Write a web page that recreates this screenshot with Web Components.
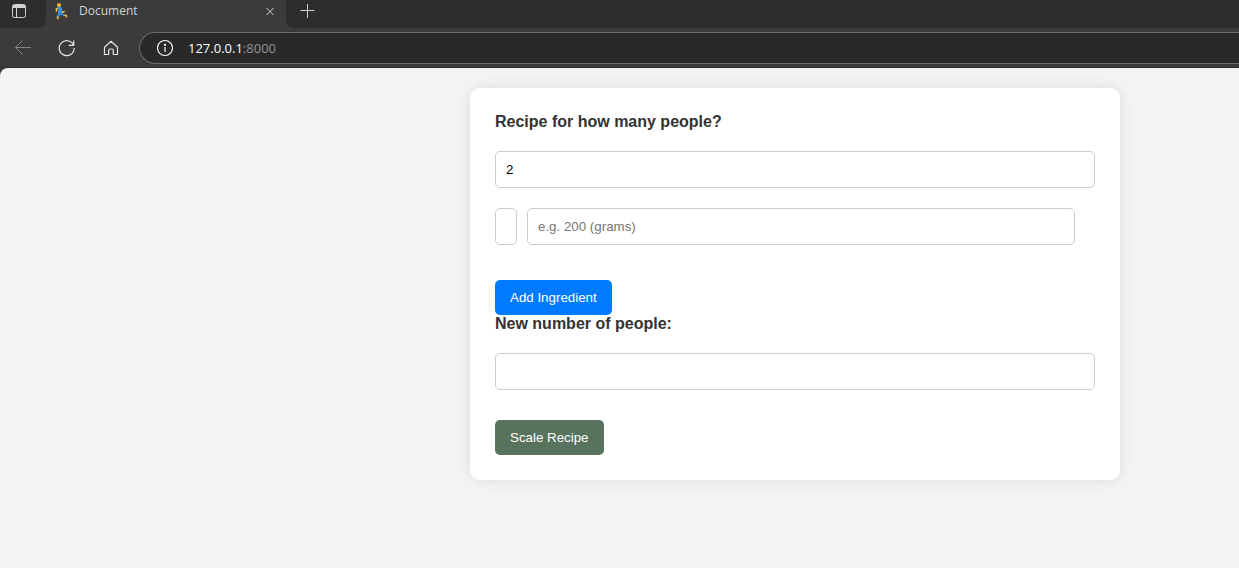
<!DOCTYPE html>
<html lang="en">
<head>
<meta charset="utf-8">
<title>Document</title>
<style>
  html { height: 100%; }
  body { margin: 0; min-height: 100%; display: flex; flex-direction: column; background: #3b3b3b; font-family: "Liberation Sans", Arial, sans-serif; overflow-x: hidden; }
  recipe-page { flex: 1; }
</style>
</head>
<body>
<tab-strip><browser-tab>Document</browser-tab></tab-strip>
<browser-toolbar><span>127.0.0.1</span><span slot="port">:8000</span></browser-toolbar>
<recipe-page><recipe-form></recipe-form></recipe-page>

<script>
const define = (name, html, setup) => {
  const template = document.createElement('template');
  template.innerHTML = html;
  customElements.define(name, class extends HTMLElement {
    constructor() {
      super();
      this.attachShadow({ mode: 'open' }).append(template.content.cloneNode(true));
    }
    connectedCallback() { if (setup) setup(this, this.shadowRoot); }
  });
};

const reset = `
  button { margin: 0; border: 0; padding: 0; background: none; color: inherit; display: flex; align-items: center; justify-content: center; }
  svg { display: block; fill: none; stroke: currentColor; }`;

define('browser-tab', `
<style>${reset}
  :host { display: flex; align-items: center; box-sizing: border-box; width: 240px; height: 28px; padding: 0 8px 6px 8px; background: #3b3b3b; color: #d2d2d2; font: 12px/16px "Open Sans", "Noto Sans", sans-serif; }
  .title { flex: 1; margin-left: 9px; }
  button { width: 16px; height: 16px; }
</style>
<svg width="16" height="18" viewBox="0 0 16 18" aria-hidden="true">
  <g stroke="none">
    <path fill="#f9c23c" d="M3.6 5.2 1.6 6.4l.2 3.2 1.2.4.2-2.6 1.6-.6zM8 8.4l1 .9 1.6-.6.6.8-2.2 1.5-2-.8z"/>
    <path fill="#3a8fdc" d="M3.6 5.2q2-.8 3.6-.2l1 1.6-.4 4.2 2.6 1.6 1.4 0v1.7l-2.6 0-2.6-1.5-1.6 2.2-2 .6-.6-1.2 1.6-1.6z"/>
    <path fill="#f9c23c" d="m10.6 12.5 1.6.1.9.8-.7 2-1-.3.2-1-1-.1zM3.1 14.2l1.6.4-.4 2H3z"/>
    <circle cx="5" cy="3" r="2" fill="#f9c23c"/>
    <path fill="#c26a25" d="M2.9 3Q2.7.8 5 .8q1.6 0 1.6 1L4.4 2.1z"/>
    <path fill="#e8a13a" d="M2.9 16.3h2.2v.9H2.8zM12.4 13.3l1.1.4-.8 2-1-.3z"/>
  </g>
</svg>
<span class="title"><slot></slot></span>
<button aria-label="Close tab"><svg width="10" height="10" viewBox="0 0 10 10"><path d="m1.5 2 7 7M8.500 2l-7 7"/></svg></button>
`);

define('tab-strip', `
<style>${reset}
  :host { display: flex; height: 28px; color: #d2d2d2; background: #3b3b3b; }
  .side { background: #2d2d2d; display: flex; box-sizing: border-box; padding-bottom: 6px; }
  .menu { width: 46px; padding-left: 11px; border-radius: 0 0 8px 0; }
  .rest { flex: 1; padding-left: 14px; border-radius: 0 0 0 8px; }
  .rest button { width: 16px; }
</style>
<div class="side menu"><button aria-label="Tab actions"><svg width="16" height="16" viewBox="0 0 16 16"><rect x="1.5" y="1.5" width="13" height="13" rx="2"/><path fill="currentColor" stroke="none" d="M2 2h12v3H2z"/><path d="M5.500 5v9"/></svg></button></div>
<slot></slot>
<div class="side rest"><button aria-label="New tab"><svg width="16" height="16" viewBox="0 0 16 16"><path d="M7.500 1v14M.5 7.500h14"/></svg></button></div>
`);

define('browser-toolbar', `
<style>${reset}
  :host { display: flex; align-items: center; box-sizing: border-box; height: 40px; padding: 0 0 0 13px; background: #3b3b3b; border-bottom: 1px solid #302e30; color: #e6e6e6; }
  nav { display: flex; gap: 24px; margin-right: 18px; }
  nav button { width: 20px; height: 20px; }
  nav button:disabled { color: #858585; }
  .address { flex: 1; display: flex; align-items: center; box-sizing: border-box; height: 32px; padding-left: 15px; border: 1px solid #6c6c6c; border-right: 0; border-radius: 16px 0 0 16px; background: #292929; font: 13px/18px "Open Sans", "Noto Sans", sans-serif; color: #fff; }
  .url { margin-left: 13px; }
  .port { color: #929292; }
</style>
<nav aria-label="Browser">
  <button disabled aria-label="Back"><svg width="20" height="20" viewBox="0 0 20 20"><path d="M18 9.500H2.500M9.500 2.500l-7 7 7 7"/></svg></button>
  <button aria-label="Refresh"><svg width="20" height="20" viewBox="0 0 20 20" stroke-width="1.2"><path d="M16.500 7A7.500 7.500 0 1 0 17.200 10M16.700 2.500v4.800h-5"/></svg></button>
  <button aria-label="Home"><svg width="20" height="20" viewBox="0 0 20 20" stroke-width="1.2" stroke-linejoin="round"><path d="M3.500 9.200 10 3.300l6.500 5.900v7.300h-4.200v-4.200q0-1.300-1.300-1.300H9q-1.300 0-1.300 1.300v4.200H3.500z"/></svg></button>
</nav>
<div class="address">
  <button aria-label="Site information"><svg width="20" height="20" viewBox="0 0 20 20" stroke-width="1.2"><circle cx="10" cy="10" r="7.500"/><path d="M10 9v5"/><circle cx="10" cy="6.800" r=".5" fill="currentColor"/></svg></button>
  <div class="url" role="textbox" aria-label="Address"><slot></slot><span class="port"><slot name="port"></slot></span></div>
</div>
`);

define('recipe-page', `
<style>
  :host { display: grid; grid-template-columns: 79fr minmax(0, 650px) 20fr; align-items: start; box-sizing: border-box; padding: 20px 0; background: #f4f4f4; border-radius: 8px 0 0 0; }
  slot { display: block; grid-column: 2; }
</style>
<slot></slot>
`);

const input = `
  input { box-sizing: border-box; width: 100%; height: 37px; padding: 10px; border: 1px solid #ccc; border-radius: 5px; background: #fff; font-family: "Liberation Sans", Arial, sans-serif; appearance: textfield; }`;

define('form-field', `
<style>${input}
  :host { display: flex; flex-direction: column; gap: 20px; color: #333; }
  label { font-size: 16px; line-height: 18px; font-weight: bold; }
</style>
<label for="field"><slot></slot></label>
<input id="field" type="number">
`, (host, root) => { root.querySelector('input').value = host.getAttribute('value') || ''; });

define('ingredient-row', `
<style>${input}
  :host { display: grid; grid-template-columns: 22px 1fr; gap: 10px; padding-right: 20px; }
</style>
<input type="text" aria-label="Ingredient">
<input type="number" aria-label="Amount in grams" placeholder="e.g. 200 (grams)">
`);

define('action-button', `
<style>
  :host { display: flex; }
  button { height: 35px; padding: 0 15px; border: 0; border-radius: 5px; background: var(--action-color); color: #fff; font-family: "Liberation Sans", Arial, sans-serif; }
</style>
<button type="button"><slot></slot></button>
`);

define('recipe-form', `
<style>
  :host { display: block; box-sizing: border-box; padding: 25px; border-radius: 10px; background: #fff; box-shadow: 0 0 15px rgba(0, 0, 0, .1); }
  ingredient-row { margin: 20px 0 35px; }
  .add { --action-color: #007bff; }
  .scale { --action-color: #58735c; margin-top: 30px; }
</style>
<form-field value="2">Recipe for how many people?</form-field>
<ingredient-row></ingredient-row>
<action-button class="add">Add Ingredient</action-button>
<form-field>New number of people:</form-field>
<action-button class="scale">Scale Recipe</action-button>
`);
</script>
</body>
</html>
